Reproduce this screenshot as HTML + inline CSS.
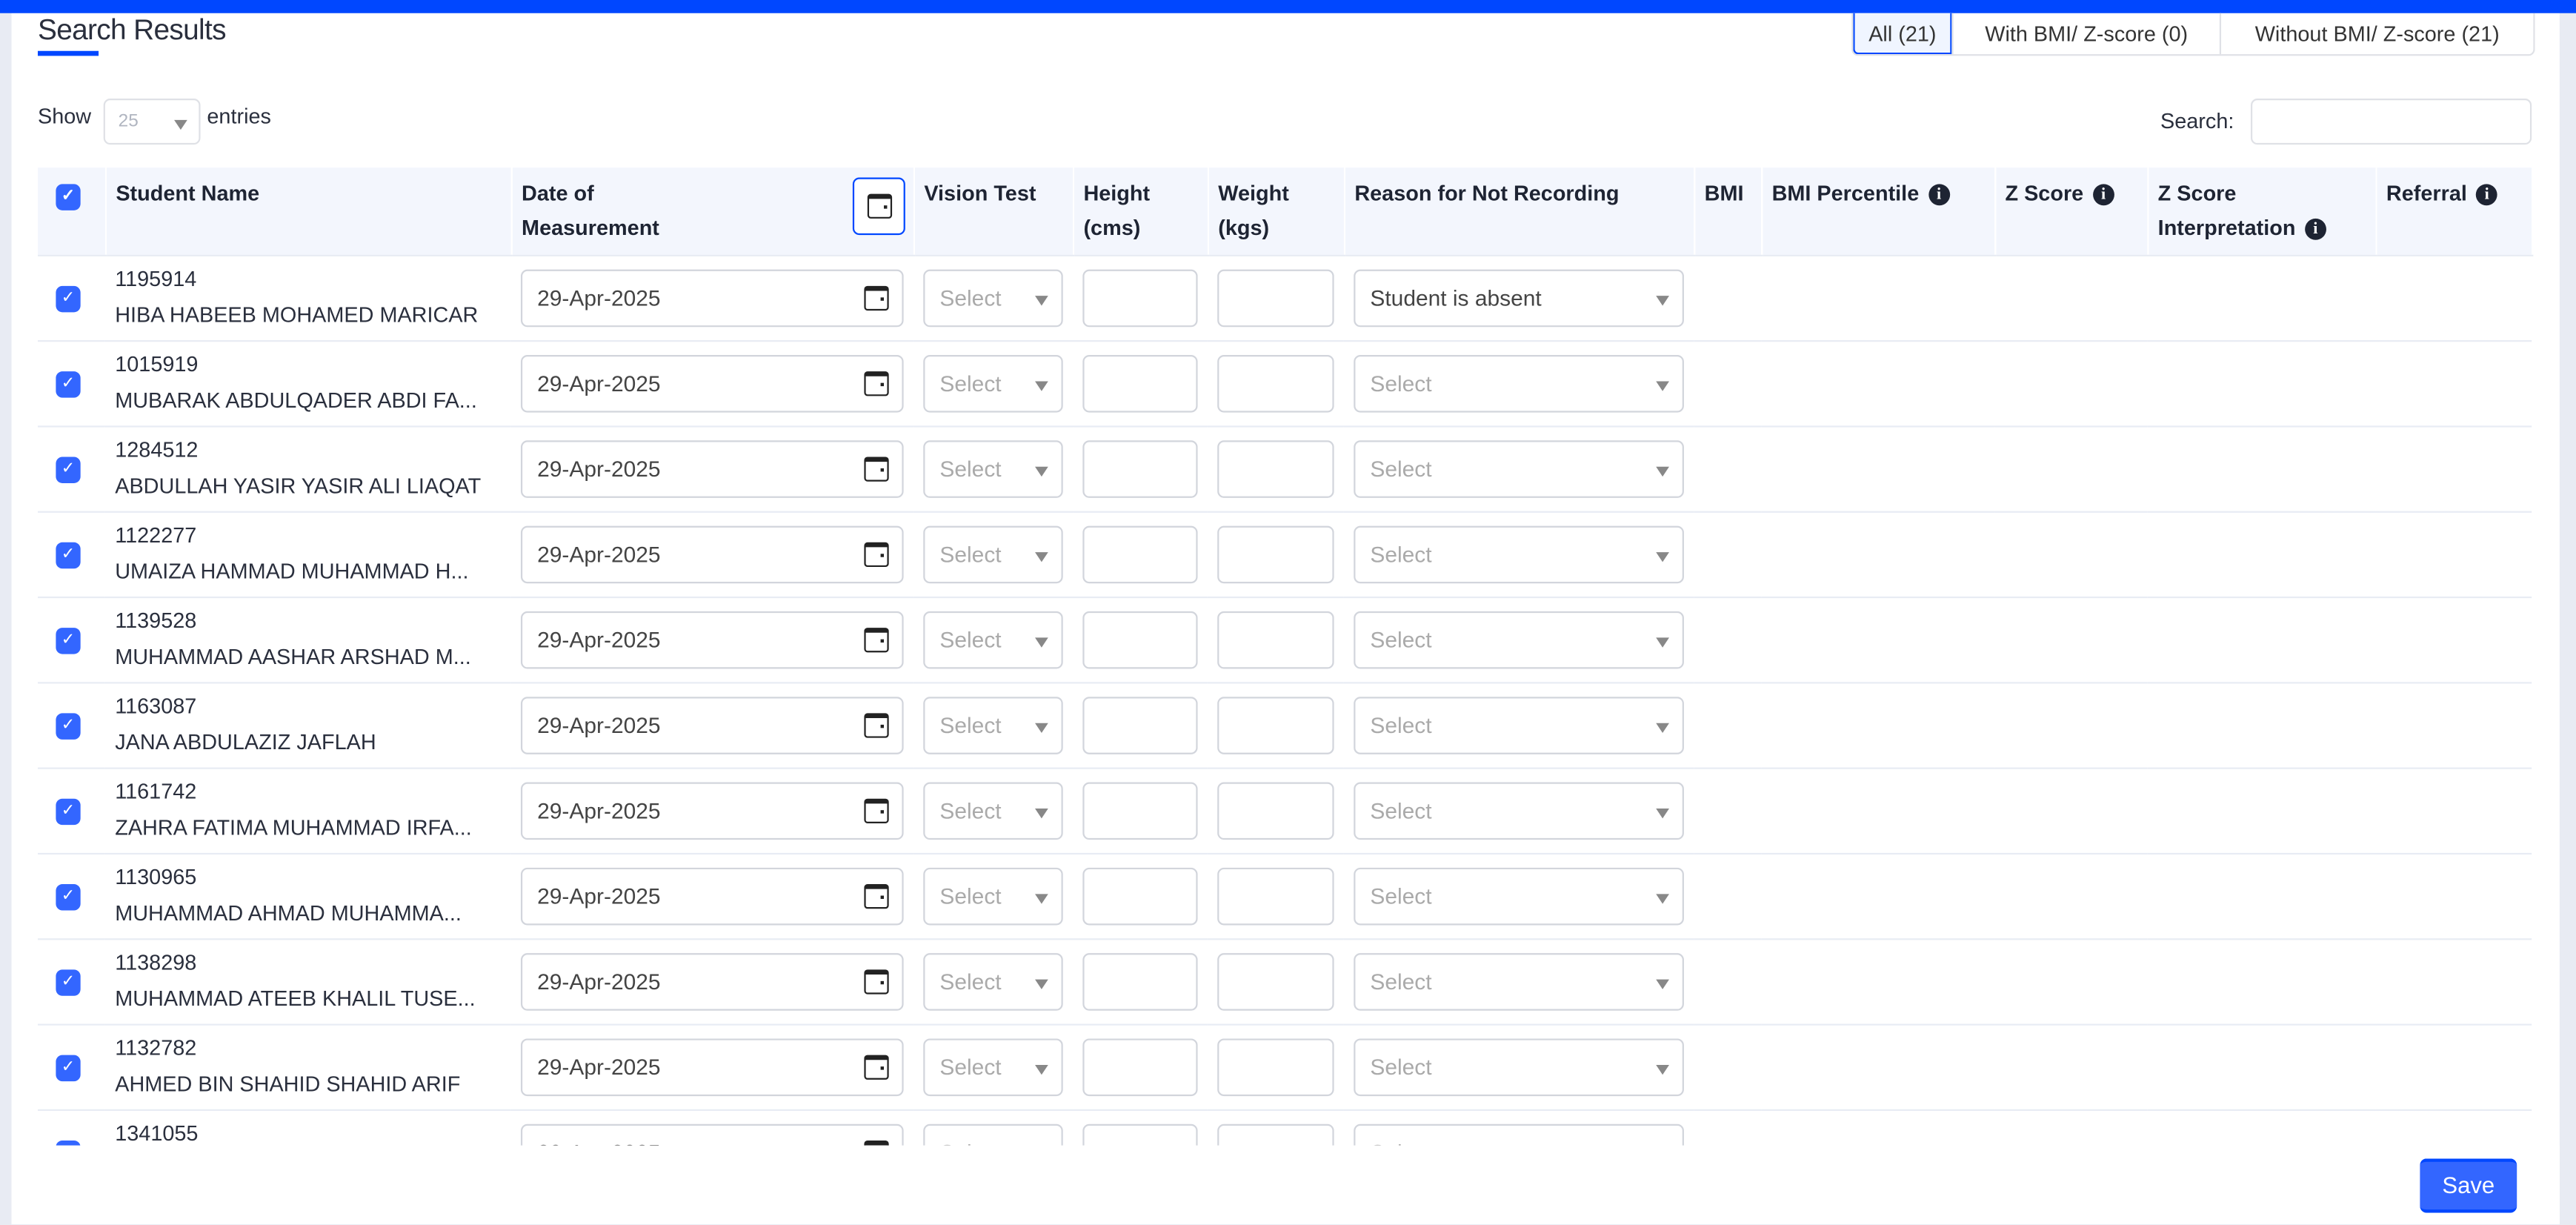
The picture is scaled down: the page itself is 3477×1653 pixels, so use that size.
<!DOCTYPE html>
<html><head><meta charset="utf-8"><style>
*{box-sizing:border-box;margin:0;padding:0}
html,body{width:3477px;height:1653px;overflow:hidden;background:#e8ebf3}
#w{position:absolute;left:0;top:0;width:1568px;height:745px;transform:scale(2.2175);transform-origin:0 0;font-family:"Liberation Sans",sans-serif;color:#2a2f3d;background:#e8ebf3}
.bar{position:absolute;left:0;top:0;width:1568px;height:8px;background:#0047ff}
.card{position:absolute;left:7px;top:8px;width:1551px;height:737px;background:#fff}
.title{position:absolute;left:23px;top:8px;font-size:17.5px;letter-spacing:-.3px}
.ul{position:absolute;left:23px;top:31px;width:37px;height:3px;background:#0047ff}
.tabs{position:absolute;left:1127px;top:8px;height:26px;display:flex;border:1px solid #dfe1e6;border-top:none;border-radius:0 0 4px 4px;font-size:13px;white-space:nowrap}
.tabs div{padding:5px 0 0;border-left:1px solid #dfe1e6;color:#333;text-align:center}
.tabs div:first-child{border:1px solid #0047ff;border-top:none;background:#f0f5ff;width:60px;border-radius:0 0 0 3px}
.show{position:absolute;left:23px;top:63px;font-size:13px}
.sel25{position:absolute;left:63px;top:60px;width:59px;height:28px;border:1px solid #dfe1e6;border-radius:4px;color:#b0b5c0;font-size:11px;padding:7px 8px}
.sel25:after,.dd:after{content:"";position:absolute;right:7px;top:12px;border:4px solid transparent;border-top:6px solid #888;border-bottom:none}
.ent{position:absolute;left:126px;top:63px;font-size:13px}
.slab{position:absolute;left:1315px;top:66px;font-size:13px}
.sin{position:absolute;left:1370px;top:60px;width:171px;height:28px;border:1px solid #dfe1e6;border-radius:4px}
table{position:absolute;left:23px;top:102px;width:1518px;border-collapse:collapse;table-layout:fixed;font-size:13px}
th{background:#f3f6fd;text-align:left;vertical-align:top;font-weight:bold;height:53px;padding:5px 6px 4px;line-height:21px;border-right:1px solid #fff;border-bottom:1px solid #e8ecf4;position:relative;color:#1e2433}
td{height:52px;border-bottom:1px solid #e8ecf4;padding:0 6px;vertical-align:middle;position:relative}
.cb{display:inline-block;width:15px;height:16px;background:#3366ff;border-radius:4px;color:#fff;font-size:10px;text-align:center;line-height:16px;margin-left:5px}
th .cb{margin-top:4px}
.nm{line-height:22px;font-size:13px;white-space:nowrap;overflow:hidden;text-overflow:ellipsis;color:#2a2f3d}
.in{height:35px;border:1px solid #d2d5dc;border-radius:4px;position:relative;font-size:13.5px;color:#444;padding:9px 9px}
.ph{color:#aaa}
.dd{position:relative}
.dd:after{top:15px;right:8px}
.cal{position:absolute;right:8px;top:9px;width:15px;height:15px;border:1.6px solid #222;border-radius:2px;border-top-width:3px}
.cal:after{content:"";position:absolute;right:2px;top:4px;width:2px;height:2px;background:#222}
.hcal{position:absolute;left:207px;top:6px;width:32px;height:35px;border:1.5px solid #0047ff;border-radius:4px;background:#fff}
.hcal .cal{right:7px;top:9px}
.i{display:inline-block;width:13px;height:13px;border-radius:50%;background:#1e2433;color:#fff;font-size:10px;line-height:13px;text-align:center;font-family:"Liberation Serif",serif;font-weight:bold;vertical-align:1px;margin-left:2px}
.foot{position:absolute;left:7px;top:697px;width:1551px;height:48px;background:#fff}
.save{position:absolute;left:1473px;top:705px;width:59px;height:33px;background:#3366ff;border-radius:4px;color:#fff;font-size:14px;text-align:center;line-height:29px;border-top:2px solid #0047ff;border-bottom:2px solid #0047ff}
</style></head><body><div id="w">
<div class="card"></div>
<div class="bar"></div>
<div class="title">Search Results</div><div class="ul"></div>
<div class="tabs"><div>All (21)</div><div style="width:163px">With BMI/ Z-score (0)</div><div style="width:191px">Without BMI/ Z-score (21)</div></div>
<div class="show">Show</div><div class="sel25">25</div><div class="ent">entries</div>
<div class="slab">Search:</div><div class="sin"></div>
<table>
<colgroup><col style="width:41px"><col style="width:247px"><col style="width:245px"><col style="width:97px"><col style="width:82px"><col style="width:83px"><col style="width:213px"><col style="width:41px"><col style="width:142px"><col style="width:93px"><col style="width:139px"><col style="width:95px"></colgroup>
<tr><th><span class="cb">✓</span></th><th>Student Name</th><th>Date of<br>Measurement<div class="hcal"><div class="cal"></div></div></th><th>Vision Test</th><th>Height<br>(cms)</th><th>Weight<br>(kgs)</th><th>Reason for Not Recording</th><th>BMI</th><th>BMI Percentile <span class="i">i</span></th><th>Z Score <span class="i">i</span></th><th>Z Score<br>Interpretation <span class="i">i</span></th><th>Referral <span class="i">i</span></th></tr>
<tr><td><span class="cb">✓</span></td><td><div class="nm">1195914<br>HIBA HABEEB MOHAMED MARICAR</div></td><td><div class="in">29-Apr-2025<div class="cal"></div></div></td><td><div class="in dd ph">Select</div></td><td><div class="in"></div></td><td><div class="in"></div></td><td><div class="in dd">Student is absent</div></td><td></td><td></td><td></td><td></td><td></td></tr>
<tr><td><span class="cb">✓</span></td><td><div class="nm">1015919<br>MUBARAK ABDULQADER ABDI FA...</div></td><td><div class="in">29-Apr-2025<div class="cal"></div></div></td><td><div class="in dd ph">Select</div></td><td><div class="in"></div></td><td><div class="in"></div></td><td><div class="in dd ph">Select</div></td><td></td><td></td><td></td><td></td><td></td></tr>
<tr><td><span class="cb">✓</span></td><td><div class="nm">1284512<br>ABDULLAH YASIR YASIR ALI LIAQAT</div></td><td><div class="in">29-Apr-2025<div class="cal"></div></div></td><td><div class="in dd ph">Select</div></td><td><div class="in"></div></td><td><div class="in"></div></td><td><div class="in dd ph">Select</div></td><td></td><td></td><td></td><td></td><td></td></tr>
<tr><td><span class="cb">✓</span></td><td><div class="nm">1122277<br>UMAIZA HAMMAD MUHAMMAD H...</div></td><td><div class="in">29-Apr-2025<div class="cal"></div></div></td><td><div class="in dd ph">Select</div></td><td><div class="in"></div></td><td><div class="in"></div></td><td><div class="in dd ph">Select</div></td><td></td><td></td><td></td><td></td><td></td></tr>
<tr><td><span class="cb">✓</span></td><td><div class="nm">1139528<br>MUHAMMAD AASHAR ARSHAD M...</div></td><td><div class="in">29-Apr-2025<div class="cal"></div></div></td><td><div class="in dd ph">Select</div></td><td><div class="in"></div></td><td><div class="in"></div></td><td><div class="in dd ph">Select</div></td><td></td><td></td><td></td><td></td><td></td></tr>
<tr><td><span class="cb">✓</span></td><td><div class="nm">1163087<br>JANA ABDULAZIZ JAFLAH</div></td><td><div class="in">29-Apr-2025<div class="cal"></div></div></td><td><div class="in dd ph">Select</div></td><td><div class="in"></div></td><td><div class="in"></div></td><td><div class="in dd ph">Select</div></td><td></td><td></td><td></td><td></td><td></td></tr>
<tr><td><span class="cb">✓</span></td><td><div class="nm">1161742<br>ZAHRA FATIMA MUHAMMAD IRFA...</div></td><td><div class="in">29-Apr-2025<div class="cal"></div></div></td><td><div class="in dd ph">Select</div></td><td><div class="in"></div></td><td><div class="in"></div></td><td><div class="in dd ph">Select</div></td><td></td><td></td><td></td><td></td><td></td></tr>
<tr><td><span class="cb">✓</span></td><td><div class="nm">1130965<br>MUHAMMAD AHMAD MUHAMMA...</div></td><td><div class="in">29-Apr-2025<div class="cal"></div></div></td><td><div class="in dd ph">Select</div></td><td><div class="in"></div></td><td><div class="in"></div></td><td><div class="in dd ph">Select</div></td><td></td><td></td><td></td><td></td><td></td></tr>
<tr><td><span class="cb">✓</span></td><td><div class="nm">1138298<br>MUHAMMAD ATEEB KHALIL TUSE...</div></td><td><div class="in">29-Apr-2025<div class="cal"></div></div></td><td><div class="in dd ph">Select</div></td><td><div class="in"></div></td><td><div class="in"></div></td><td><div class="in dd ph">Select</div></td><td></td><td></td><td></td><td></td><td></td></tr>
<tr><td><span class="cb">✓</span></td><td><div class="nm">1132782<br>AHMED BIN SHAHID SHAHID ARIF</div></td><td><div class="in">29-Apr-2025<div class="cal"></div></div></td><td><div class="in dd ph">Select</div></td><td><div class="in"></div></td><td><div class="in"></div></td><td><div class="in dd ph">Select</div></td><td></td><td></td><td></td><td></td><td></td></tr>
<tr><td><span class="cb">✓</span></td><td><div class="nm">1341055<br>NAME</div></td><td><div class="in">29-Apr-2025<div class="cal"></div></div></td><td><div class="in dd ph">Select</div></td><td><div class="in"></div></td><td><div class="in"></div></td><td><div class="in dd ph">Select</div></td><td></td><td></td><td></td><td></td><td></td></tr>
</table>
<div class="foot"></div>
<div class="save">Save</div>
</div></body></html>
